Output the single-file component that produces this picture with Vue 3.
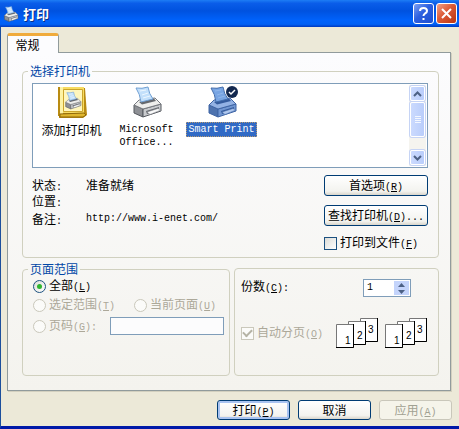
<script setup>
import { ref } from "vue";

const printers = [
  { id: "add", lines: ["添加打印机"], folder: true },
  { id: "office", lines: ["Microsoft", "Office..."], latin: true },
  { id: "smart", lines: ["Smart Print"], latin: true, isDefault: true },
];

const selected = ref("smart");
const range = ref("all");
const pages = ref("");
const toFile = ref(false);
const collate = ref(true);
const copies = ref(1);

function changeCopies(step) {
  copies.value = Math.max(1, Number(copies.value) + step);
}
</script>

<template>
  <div class="window">
    <!-- 公用的打印机图形 -->
    <svg class="defs" width="0" height="0" aria-hidden="true">
      <symbol id="printer" viewBox="0 0 32 32">
        <path class="side" d="M3 19 L12 23 V31 L3 27 Z" />
        <path class="front" d="M12 23 L30 18 V25 L12 31 Z" />
        <path class="top" d="M3 19 L8 14 L24 12 L30 18 L12 23 Z" />
        <path class="slot" d="M8 16 L23 12.500 L25 15 L11 18.500 Z" />
        <path class="paper" d="M5 2 Q11 3 17 1 Q18 8 22 13 L10 16 Q9 8 5 2 Z" />
        <path class="ink" d="M9 5 L15 4 M11 9 L17 7 M12 12 L19 10" />
        <path class="slot" d="M15 25 L28 21 V24 L16 28 Z" />
        <path class="tray" d="M16 26 L27 22.500 L30 24 L19 28.500 Z" />
      </symbol>
    </svg>

    <header class="titlebar">
      <svg class="title-icon" viewBox="0 0 32 32"><use href="#printer" /></svg>
      <h1>打印</h1>
      <button class="caption help" aria-label="帮助">
        <svg viewBox="0 0 19 19">
          <path d="M6 7 Q6 4 9.500 4 Q13 4 13 7 Q13 8.500 11 9.500 Q9.500 10.500 9.500 12" />
          <path d="M9.500 14 V16" />
        </svg>
      </button>
      <button class="caption close" aria-label="关闭">
        <svg viewBox="0 0 19 19"><path d="M5 5 L14 14 M14 5 L5 14" /></svg>
      </button>
    </header>

    <main class="client">
      <nav class="tabs"><button class="tab">常规</button></nav>

      <section class="panel">
        <fieldset class="printer-group">
          <legend>选择打印机</legend>
          <div class="list">
            <div class="items">
              <button
                v-for="p in printers"
                :key="p.id"
                class="item"
                :class="{ selected: selected === p.id }"
                @click="selected = p.id"
              >
                <svg v-if="p.folder" viewBox="0 0 32 32">
                  <path fill="#b98b12" d="M3 2 H29 L31 29 L27 32 H3 Z" />
                  <path fill="#f7dc62" d="M2 1 H28 V27 H2 Z" />
                  <path fill="#b98b12" d="M2 1 H4 V30 H2 Z" />
                  <path fill="#fdf3a6" d="M4 1 H7 V28 H4 Z" />
                  <path fill="#fff6bd" stroke="#cba52c" d="M7.500 3.500 H26.500 V25.500 H7.500 Z" />
                  <path fill="#dfb62c" stroke="#8f6808" d="M4 28 L28 27 L30 29 L27 31 H4 Z" />
                  <use href="#printer" x="8" y="5" width="18" height="19" />
                </svg>
                <svg v-else viewBox="0 0 32 32">
                  <use href="#printer" />
                </svg>
                <svg v-if="p.isDefault" class="badge" viewBox="0 0 12 12">
                  <circle cx="6" cy="6" r="6" fill="#12284f" />
                  <path fill="none" stroke="#fff" stroke-width="1.500" d="M3 6 L5 8 L9 4" />
                </svg>
                <span class="caption-text" :class="{ en: p.latin }">
                  <template v-for="(line, i) in p.lines" :key="line"><br v-if="i" />{{ line }}</template>
                </span>
              </button>
            </div>
            <div class="scrollbar">
              <button class="arrow" aria-label="向上">
                <svg viewBox="0 0 9 6"><path d="M1 5 L4.500 1.500 L8 5" /></svg>
              </button>
              <div class="thumb"><i></i><i></i><i></i><i></i></div>
              <button class="arrow down" aria-label="向下">
                <svg viewBox="0 0 9 6"><path d="M1 1 L4.500 4.500 L8 1" /></svg>
              </button>
            </div>
          </div>

          <div class="details">
            <dl>
              <dt>状态<span class="en">:</span></dt>
              <dd>准备就绪</dd>
              <dt>位置<span class="en">:</span></dt>
              <dd></dd>
              <dt class="note">备注<span class="en">:</span></dt>
              <dd class="note en">http://www.i-enet.com/</dd>
            </dl>
            <div class="actions">
              <button class="btn">首选项<span class="en">(<u>R</u>)</span></button>
              <button class="btn">查找打印机<span class="en">(<u>D</u>)...</span></button>
              <label class="option">
                <input v-model="toFile" type="checkbox" />
                <span>打印到文件<span class="en">(<u>F</u>)</span></span>
              </label>
            </div>
          </div>
        </fieldset>

        <div class="bottom">
          <fieldset class="range">
            <legend>页面范围</legend>
            <label class="option">
              <input v-model="range" type="radio" name="range" value="all" />
              <span>全部<span class="en">(<u>L</u>)</span></span>
            </label>
            <div class="pair">
              <label class="option off">
                <input v-model="range" type="radio" name="range" value="selection" disabled />
                <span>选定范围<span class="en">(<u>T</u>)</span></span>
              </label>
              <label class="option off">
                <input v-model="range" type="radio" name="range" value="current" disabled />
                <span>当前页面<span class="en">(<u>U</u>)</span></span>
              </label>
            </div>
            <div class="page-row">
              <label class="option off">
                <input v-model="range" type="radio" name="range" value="pages" disabled />
                <span>页码<span class="en">(<u>G</u>):</span></span>
              </label>
              <input v-model="pages" class="field" type="text" aria-label="页码" disabled />
            </div>
          </fieldset>

          <fieldset class="copies">
            <div class="copy-row">
              <label for="copies">份数<span class="en">(<u>C</u>):</span></label>
              <div class="spinner">
                <input id="copies" v-model="copies" class="en" type="text" />
                <div class="steps">
                  <button aria-label="增加" @click="changeCopies(1)">
                    <svg viewBox="0 0 7 4"><path d="M0 4 L3.500 0 L7 4 Z" /></svg>
                  </button>
                  <button aria-label="减少" @click="changeCopies(-1)">
                    <svg viewBox="0 0 7 4"><path d="M0 0 L3.500 4 L7 0 Z" /></svg>
                  </button>
                </div>
              </div>
            </div>
            <div class="collate-row">
              <label class="option off">
                <input v-model="collate" type="checkbox" disabled />
                <span>自动分页<span class="en">(<u>O</u>)</span></span>
              </label>
              <div class="sheets">
                <svg v-for="n in 2" :key="n" viewBox="0 0 42 30">
                  <g v-for="s in [3, 2, 1]" :key="s" :transform="`translate(${(s - 1) * 12} ${[6, 3, 0][s - 1]})`">
                    <path fill="#fff" stroke="#777" d="M0.500 0.500 H17.500 V23.500 H0.500 Z" />
                    <path fill="none" stroke="#000" d="M17.500 0 V23.500 H0" />
                    <text :x="[9, 9, 8][s - 1]" :y="[20, 18, 15][s - 1]">{{ s }}</text>
                  </g>
                </svg>
              </div>
            </div>
          </fieldset>
        </div>
      </section>

      <footer class="footer">
        <button class="btn primary">打印<span class="en">(<u>P</u>)</span></button>
        <button class="btn">取消</button>
        <button class="btn" disabled>应用<span class="en">(<u>A</u>)</span></button>
      </footer>
    </main>
  </div>
</template>

<style>
body {
  margin: 0;
}
</style>

<style scoped>
* {
  box-sizing: border-box;
}

.window {
  display: flex;
  flex-direction: column;
  min-height: 100vh;
  border-left: 1px solid #1c4f9c;
  border-bottom: 3px solid #0019a8;
  background: #ece9d8;
  color: #000;
  font: 12px/16px "Noto Sans CJK SC", sans-serif;
}

button,
input {
  margin: 0;
  padding: 0;
  border: 0;
  color: inherit;
  font: inherit;
}

.en {
  font-family: "Liberation Mono", monospace;
  font-size: 10px;
}

.defs {
  position: absolute;
}

.side {
  fill: var(--side, #8e9095);
  stroke: var(--line, #55585e);
}

.front {
  fill: var(--front, #c9cbce);
  stroke: var(--line, #55585e);
}

.top {
  fill: var(--top, #eeeeec);
  stroke: var(--line, #777a80);
}

.slot {
  fill: var(--slot, #65686d);
}

.paper {
  fill: var(--paper, #c3e0fb);
  stroke: var(--edge, #6f9fd3);
}

.ink {
  fill: none;
  stroke: var(--ink, #edf7ff);
}

.tray {
  fill: var(--tray, #fafafa);
  stroke: var(--line, #777a80);
  stroke-width: 0.5;
}

/* 标题栏 */
.titlebar {
  display: flex;
  align-items: center;
  gap: 2px;
  height: 27px;
  margin-left: -1px;
  padding: 0 2px 0 3px;
  background: linear-gradient(#1d7df5, #0a5de9 12%, #0052df 40%, #0062fb 75%, #0060f5 90%, #0038bd);
}

.title-icon {
  width: 16px;
  height: 16px;
}

h1 {
  flex: 1;
  margin: 0 0 0 2px;
  color: #fff;
  font-size: 13px;
  font-weight: bold;
  line-height: 18px;
  text-shadow: 1px 1px #0b2d86;
}

.caption {
  width: 21px;
  height: 21px;
  border: 1px solid #fff;
  border-radius: 3px;
}

.caption svg {
  display: block;
  width: 19px;
  height: 19px;
  fill: none;
  stroke: #fff;
  stroke-width: 2;
}

.help {
  background: linear-gradient(135deg, #7ba0f4, #2d60df 45%, #1d4ed0);
}

.close {
  background: linear-gradient(135deg, #efa088, #dc5a36 45%, #bb3511);
}

.client {
  flex: 1;
  display: flex;
  flex-direction: column;
  padding: 6px 7px 6px 6px;
}

/* 选项卡 */
.tabs {
  display: flex;
}

.tab {
  position: relative;
  z-index: 1;
  width: 52px;
  height: 20px;
  margin-bottom: -1px;
  padding-right: 11px;
  border: 1px solid #919b9c;
  border-top: 3px solid #f0ab3c;
  border-bottom: 0;
  border-radius: 3px 3px 0 0;
  background: #fcfcfe;
  line-height: 14px;
}

.panel {
  flex: 1;
  display: flex;
  flex-direction: column;
  margin-right: 1px;
  padding: 11px 11px 14px 14px;
  border: 1px solid #919b9c;
  background: linear-gradient(#fcfcfe, #f4f3ee);
  box-shadow: 1px 1px #d3d0bf;
}

fieldset {
  min-width: 0;
  margin: 0;
  border: 1px solid #d0d0bf;
  border-radius: 4px;
}

legend {
  padding: 0 2px;
  color: #0046a6;
  line-height: 14px;
}

.printer-group {
  padding: 5px 10px 6px 9px;
}

.printer-group legend {
  margin-left: -4px;
}

.list {
  display: flex;
  height: 85px;
  padding: 1px;
  border: 1px solid #7f9db9;
  background: #fff;
}

.items {
  flex: 1;
  display: flex;
  align-items: flex-start;
}

.item {
  position: relative;
  display: flex;
  flex-direction: column;
  align-items: center;
  gap: 4px;
  width: 75px;
  padding-top: 1px;
  background: none;
}

.item svg {
  width: 32px;
  height: 32px;
}

.item .badge {
  position: absolute;
  top: 1px;
  right: 21px;
  width: 12px;
  height: 12px;
}

.caption-text {
  padding: 0 1px;
  border: 1px solid transparent;
  line-height: 13px;
  white-space: nowrap;
}

.selected {
  --side: #4d72ae;
  --front: #7196d1;
  --top: #93b2e4;
  --slot: #345b9d;
  --paper: #78a5e3;
  --edge: #426cab;
  --ink: #91b7eb;
  --tray: #b0c8ee;
  --line: #3f65a5;
}

.selected .caption-text {
  border: 1px dotted #b79a72;
  background: #316ac5;
  color: #fff;
}

/* 滚动条 */
.scrollbar {
  display: flex;
  flex-direction: column;
  gap: 1px;
  width: 17px;
  padding: 1px;
  background: #f5f4ef;
}

.arrow,
.thumb {
  border: 1px solid #fff;
  border-radius: 2px;
  background: linear-gradient(90deg, #cbdafe, #b9cdfb);
  box-shadow: 0 0 0 1px #c6d4f5;
}

.arrow {
  height: 15px;
  line-height: 0;
}

.down {
  margin-top: auto;
}

.arrow svg {
  width: 9px;
  height: 6px;
  fill: none;
  stroke: #4d6185;
  stroke-width: 2;
}

.thumb {
  display: flex;
  flex-direction: column;
  align-items: center;
  justify-content: center;
  gap: 1px;
  height: 35px;
}

.thumb i {
  width: 6px;
  height: 1px;
  background: #f3f7ff;
}

/* 打印机信息 */
.details {
  display: flex;
  justify-content: space-between;
  padding-top: 7px;
}

dl {
  display: grid;
  grid-template-columns: 54px auto;
  align-content: start;
  margin: 0;
  padding-top: 2px;
}

dt,
dd {
  height: 16px;
  margin: 0;
}

.note {
  margin-top: 2px;
}

.actions {
  display: flex;
  flex-direction: column;
  gap: 9px;
  width: 104px;
}

.btn {
  height: 21px;
  border: 1px solid #003c74;
  border-radius: 3px;
  background: linear-gradient(#fff, #f3f3ef 80%, #d9d5cb);
  line-height: 18px;
  white-space: nowrap;
}

.btn:disabled {
  border-color: #c9c7ba;
  background: #f5f4ea;
  color: #a1a192;
}

.primary {
  box-shadow: inset 0 0 0 2px #a9c3f0;
}

.option {
  display: flex;
  align-items: center;
  height: 16px;
  white-space: nowrap;
}

.off {
  color: #aca899;
}

.option input {
  display: grid;
  place-items: center;
  width: 13px;
  height: 13px;
  margin-right: 3px;
  border: 1px solid #1c5180;
  background: linear-gradient(135deg, #dcdcd7, #fff);
  appearance: none;
}

.option input[type="radio"] {
  border-radius: 50%;
}

.option input[type="radio"]:checked::before {
  width: 5px;
  height: 5px;
  border-radius: 50%;
  background: #2fb52f;
  content: "";
}

.option input[type="checkbox"]:checked::before {
  width: 7px;
  height: 4px;
  margin-top: -2px;
  border: solid #21a121;
  border-width: 0 0 2px 2px;
  transform: rotate(-45deg);
  content: "";
}

.option input:disabled {
  border-color: #cac8bb;
  background: #fbfbf9;
}

.option input[type="checkbox"]:disabled::before {
  border-color: #b5b3a5;
}

.bottom {
  flex: 1;
  display: grid;
  grid-template-columns: 208px 1fr;
  gap: 4px;
  margin-top: 4px;
}

.range {
  padding: 2px 5px 8px 10px;
}

.range legend {
  margin-left: -5px;
}

.pair {
  display: flex;
  gap: 19px;
  margin-top: 3px;
}

.page-row {
  display: flex;
  align-items: center;
  justify-content: space-between;
  margin-top: 4px;
}

.field {
  width: 114px;
  height: 18px;
  border: 1px solid #7f9db9;
  background: #fcfcfd;
}

.copies {
  margin-top: 6px;
  padding: 9px 11px 8px 6px;
}

.copy-row {
  display: flex;
  align-items: center;
  justify-content: space-between;
  padding-right: 16px;
}

.spinner {
  display: flex;
  width: 48px;
  height: 18px;
  padding: 1px;
  border: 1px solid #7f9db9;
  background: #fff;
}

.spinner input {
  flex: 1;
  min-width: 0;
  padding-left: 2px;
  background: none;
}

.steps {
  display: flex;
  flex-direction: column;
  width: 15px;
}

.steps button {
  flex: 1;
  background: #c4d4fb;
  line-height: 0;
}

.steps svg {
  width: 7px;
  height: 4px;
  fill: #4d6185;
}

.collate-row {
  display: flex;
  align-items: center;
  justify-content: space-between;
  margin-top: 21px;
}

.sheets {
  display: flex;
  gap: 7px;
}

.sheets svg {
  width: 42px;
  height: 30px;
}

.sheets text {
  font: 10px "Liberation Sans", sans-serif;
}

.footer {
  display: flex;
  justify-content: flex-end;
  gap: 8px;
  padding-top: 9px;
}

.footer .btn {
  width: 73px;
  height: 20px;
}
</style>
